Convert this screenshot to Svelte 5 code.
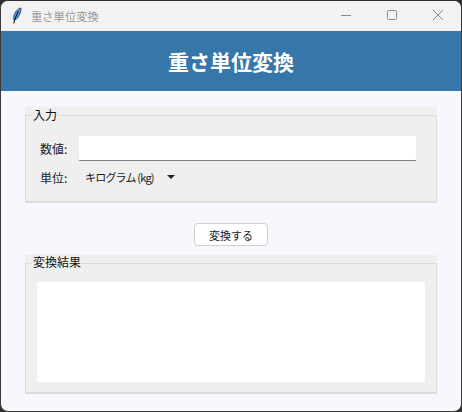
<script>
    let value = $state("");
    let unit = $state("キログラム (kg)");
    let result = $state("");
</script>

<div class="window">
    <div class="titlebar">
        <svg class="feather" width="12" height="18" viewBox="0 0 12 18">
            <path d="M10 1 C7 1.500 3.500 5 2.800 9.500 L2.800 12.500 L5 12.500 C8 10 10 5.500 10 1 Z" fill="#5d9ae6" stroke="#1c2f4d" stroke-width="0.800" />
            <path d="M7.500 4 L3.500 13 L2.800 16.500" fill="none" stroke="#000" stroke-width="1" />
        </svg>
        <span class="title">重さ単位変換</span>
        <div class="controls">
            <svg width="10" height="10" viewBox="0 0 10 10"><path d="M0 5.500 H10" stroke="#8c8c8c" /></svg>
            <svg width="10" height="10" viewBox="0 0 10 10"><rect x="0.500" y="0.500" width="9" height="9" rx="1" fill="none" stroke="#8c8c8c" /></svg>
            <svg width="10" height="10" viewBox="0 0 10 10"><path d="M0 0 L10 10 M10 0 L0 10" stroke="#8c8c8c" /></svg>
        </div>
    </div>

    <header class="banner">重さ単位変換</header>

    <main class="content">
        <section class="group input-group">
            <div class="group-box">
                <span class="legend">入力</span>
                <div class="row value-row">
                    <label for="value">数値:</label>
                    <input id="value" bind:value />
                </div>
                <div class="row unit-row">
                    <span class="label">単位:</span>
                    <button class="select">{unit}<span class="arrow"></span></button>
                </div>
            </div>
        </section>

        <button class="convert">変換する</button>

        <section class="group result-group">
            <div class="group-box">
                <span class="legend">変換結果</span>
                <div class="result">{result}</div>
            </div>
        </section>
    </main>
</div>

<style>
    :global(body) {
        margin: 0;
        background: #2e2e2e;
    }

    .window {
        width: 462px;
        height: 412px;
        box-sizing: border-box;
        border: 1px solid #3a3a3a;
        border-top-color: #2e2e2e;
        border-radius: 8px;
        overflow: hidden;
        background: #f6f8fd;
        display: flex;
        flex-direction: column;
        font-family: "Noto Sans CJK JP", "Noto Sans", sans-serif;
        font-size: 12px;
        color: #1a1a1a;
    }

    .titlebar {
        height: 30px;
        flex: none;
        display: flex;
        align-items: center;
        background: #f2f2f2;
        padding-left: 10px;
    }

    .feather {
        margin-right: 8px;
    }

    .title {
        color: #9a9a9a;
        font-size: 11.300px;
    }

    .controls {
        margin-left: auto;
        display: flex;
        gap: 36px;
        padding-right: 18px;
        margin-top: -2px;
    }

    .controls svg {
        display: block;
    }

    .banner {
        height: 60px;
        flex: none;
        display: flex;
        align-items: center;
        justify-content: center;
        background: #3776a9;
        color: #fff;
        font-size: 21px;
        font-weight: 700;
    }

    .content {
        flex: 1;
        display: flex;
        flex-direction: column;
        padding: 16px 24px 0;
    }

    .group {
        background: #efefef;
        padding-top: 8px;
    }

    .group-box {
        box-sizing: border-box;
        border: 1px solid #dcdcdc;
        border-width: 1px 1px 2px;
    }

    .input-group .group-box {
        height: 88px;
    }

    .result-group .group-box {
        height: 131px;
    }

    .legend {
        display: block;
        width: max-content;
        height: 16px;
        line-height: 16px;
        margin: -9px 0 1px 6px;
        padding: 0 1px;
        background: #efefef;
        color: #111;
    }

    .result-group .legend {
        margin-top: -10px;
        margin-bottom: 2px;
    }

    .row {
        display: flex;
        align-items: center;
    }

    .row label,
    .row .label {
        width: 38px;
        margin-left: 14px;
        color: #222;
    }

    .value-row {
        margin-top: 12px;
    }

    #value {
        box-sizing: border-box;
        width: 339px;
        height: 26px;
        border: 1px solid #ececec;
        border-bottom: 1px solid #808080;
        border-radius: 2px;
        background: #fff;
        padding: 0 6px;
        outline: none;
        font: inherit;
    }

    .unit-row {
        margin-top: 5px;
        height: 22px;
    }

    .select {
        display: flex;
        align-items: center;
        background: none;
        border: none;
        padding: 0 0 0 7px;
        font: inherit;
        font-size: 11px;
        letter-spacing: -0.800px;
        color: #1a1a1a;
    }

    .arrow {
        width: 0;
        height: 0;
        margin-left: 13px;
        border-left: 4px solid transparent;
        border-right: 4px solid transparent;
        border-top: 4px solid #222;
    }

    .convert {
        align-self: center;
        box-sizing: border-box;
        width: 74px;
        height: 23px;
        margin: 20px 0 9px;
        padding: 0;
        background: #fff;
        border: 1px solid #cfcfcf;
        border-radius: 4px;
        font: inherit;
        font-size: 11px;
        color: #1a1a1a;
    }

    .result {
        height: 100px;
        margin: 12px 11px 0;
        background: #fff;
    }
</style>
